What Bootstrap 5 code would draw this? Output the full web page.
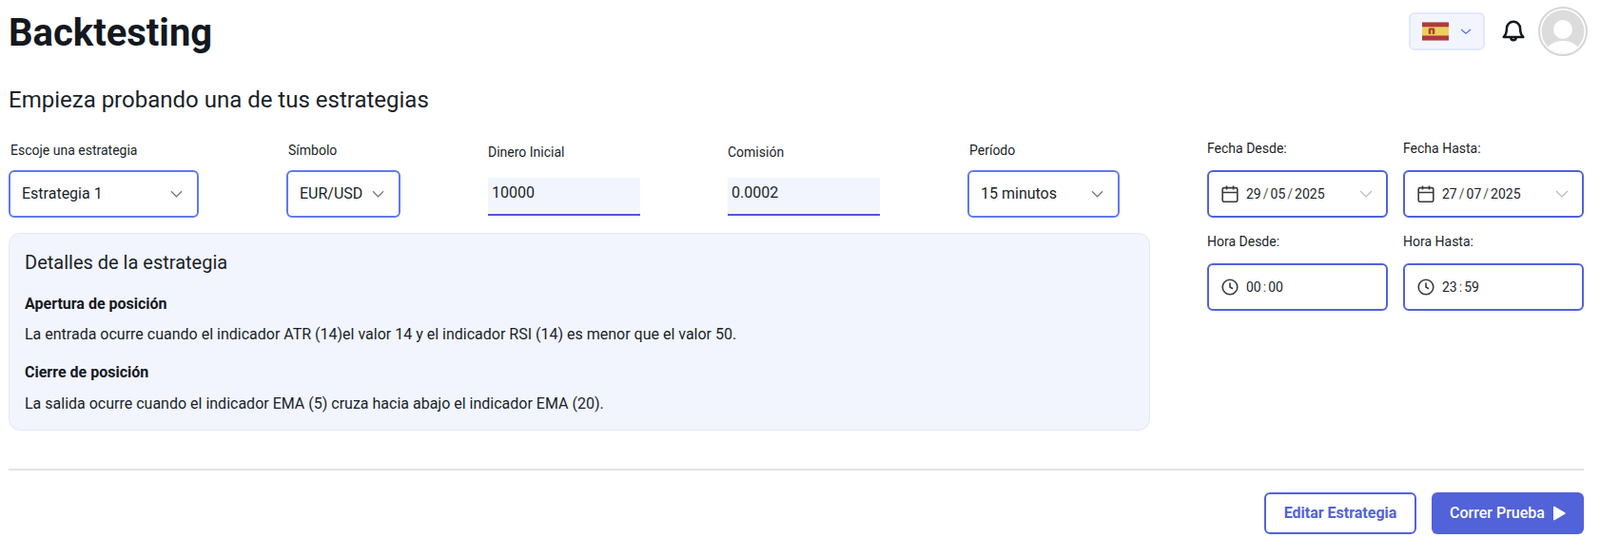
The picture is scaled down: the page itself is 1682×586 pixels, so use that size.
<!DOCTYPE html>
<html lang="es">
<head>
<meta charset="utf-8">
<title>Backtesting</title>
<link href="https://cdn.jsdelivr.net/npm/bootstrap@5.3.0/dist/css/bootstrap.min.css" rel="stylesheet">
<style>
body{font-family:Roboto,"Liberation Sans",sans-serif;color:#111827;background:#fff;overflow:hidden}
.bt-page{padding:0 17px 0 9px}
.bt-head{height:66px;margin-right:-4px}
.bt-title{font-size:40px;font-weight:700;line-height:70px;margin:0;color:#14181f}
.bt-lang{width:80px;height:40px;background:#f2f5fe;border:2px solid #e2e8fd;border-radius:6px;gap:12px}
.bt-avatar{margin-left:13px}
.bt-bell{margin-left:17px}
.bt-sub{font-size:24px;font-weight:400;line-height:32px;margin:23px 0 0;color:#1a1f29}
.bt-main{margin-top:22px}
.bt-left{width:1200px}
.bt-fields{display:grid;grid-template-columns:292px 212px 252px 252px 160px;height:102px}
.bt-label{font-size:14px;line-height:20px;margin:0;color:#1a1f29;display:block}
.bt-sel-wrap{padding-top:5px}
.bt-sel-wrap .bt-label{padding-left:2px;margin-bottom:11px}
.bt-in-wrap{padding-top:7px}
.bt-in-wrap .bt-label{margin-bottom:17px}
.bt-select.form-select{height:50px;border:2px solid #6279e8;border-radius:6px;font-size:16px;color:#1a1f29;padding:0 30px 0 12px;background-image:url("data:image/svg+xml,%3csvg xmlns='http://www.w3.org/2000/svg' viewBox='0 0 14 10'%3e%3cpath fill='none' stroke='%23777' stroke-width='1.300' d='M1 2l6 6 6-6'/%3e%3c/svg%3e");background-position:right 15px center;background-size:13px 10px;box-shadow:none}
.bt-w-1{width:200px}
.bt-w-2{width:120px}
.bt-w-3{width:160px}
.bt-number.form-control{width:160px;height:40px;background:#f2f5fe;border:0;border-bottom:2px solid #4f55de;border-radius:0;font-size:16px;color:#1a1f29;padding:0 4px 8px;box-shadow:none}
.bt-panel{width:1200px;height:208px;background:#f2f5fe;border:1px solid #e3e8f8;border-radius:12px;padding:16px 16px 0}
.bt-panel h5{font-size:20px;font-weight:400;line-height:28px;margin:0 0 18px;color:#1a1f29}
.bt-panel h6{font-size:16px;font-weight:700;line-height:24px;margin:0 0 8px;color:#14181f}
.bt-panel h6:nth-of-type(2){margin-bottom:9px}
.bt-panel p{font-size:16px;line-height:24px;margin:0 0 16px;color:#1a1f29}
.bt-right{margin-left:60px;width:396px;display:grid;grid-template-columns:190px 190px;column-gap:16px;align-content:start}
.bt-date-label{font-size:14px;line-height:20px;margin:3px 0 13px;color:#1a1f29;display:block}
.bt-hour-label{margin-top:0}
.bt-pick{height:50px;border:2px solid #5262d8;border-radius:6px;padding:0 14px 0 13px;font-size:14px;color:#1a1f29;margin-bottom:15px}
.bt-pick .bt-val{margin-left:8px}
.bt-pick .bt-sep{color:#555;padding:0 2px}
.bt-rule{border:0;border-top:2px solid #e2e2e2;opacity:1;margin:40px 0 0}
.bt-foot{margin-top:23px;gap:16px}
.bt-btn.btn{width:160px;height:44px;font-size:16px;border-radius:6px;padding:0;font-weight:500}
.bt-outline.btn{border:2px solid #5262d8;color:#5262d8;background:#fff;font-weight:700}
.bt-fill.btn{border:0;background:#5262d8;color:#fff;font-weight:500}
</style>
</head>
<body>
<div class="bt-page">
  <header class="bt-head d-flex align-items-center">
    <h1 class="bt-title flex-grow-1 align-self-start">Backtesting</h1>
    <div class="bt-lang d-flex align-items-center justify-content-center">
      <svg width="28" height="20" viewBox="0 0 28 20" aria-label="España">
        <rect width="28" height="20" fill="#d9a9a9"/>
        <rect y=".7" width="28" height="4.800" fill="#b03a3a"/>
        <rect y="5.500" width="28" height="9" fill="#edd15c"/>
        <rect y="14.500" width="28" height="4.800" fill="#b03a3a"/>
        <path d="M6.700 7.800l1-1.300h4.600l1 1.300v4.200a1 1 0 0 1-1 1h-4.600a1 1 0 0 1-1-1z" fill="#a8412c"/>
        <rect x="9.200" y="8.500" width="1.600" height="4.500" fill="#edd15c"/>
      </svg>
      <svg width="12" height="12" viewBox="0 0 12 12" fill="none" stroke="#4f6cf0" stroke-width="1.200"><path d="M1 4l5 4.200L11 4"/></svg>
    </div>
    <svg class="bt-bell" width="26" height="26" viewBox="0 0 24 24" fill="none" stroke="#14181f" stroke-width="2.300" stroke-linecap="round" stroke-linejoin="round"><path d="M12 2.500a6.500 6.500 0 0 0-6.500 6.500c0 5-1.500 7-3 8.500h19c-1.500-1.500-3-3.500-3-8.500A6.500 6.500 0 0 0 12 2.500z"/><path d="M9.500 18a2.500 2.500 0 0 0 5 0"/></svg>
    <svg class="bt-avatar" width="52" height="52" viewBox="0 0 52 52"><defs><clipPath id="av"><circle cx="26" cy="26" r="22.500"/></clipPath></defs><circle cx="26" cy="26" r="25" fill="#fff" stroke="#d6d6d6" stroke-width="2"/><circle cx="26" cy="26" r="22.500" fill="#dcdcdc"/><g clip-path="url(#av)"><circle cx="26" cy="24" r="10" fill="#fff"/><ellipse cx="26" cy="47" rx="17" ry="11" fill="#fff"/></g></svg>
  </header>

  <h2 class="bt-sub">Empieza probando una de tus estrategias</h2>

  <div class="bt-main d-flex">
    <div class="bt-left">
      <div class="bt-fields">
        <div class="bt-sel-wrap">
          <label class="bt-label">Escoje una estrategia</label>
          <select class="form-select bt-select bt-w-1"><option>Estrategia 1</option></select>
        </div>
        <div class="bt-sel-wrap">
          <label class="bt-label">Símbolo</label>
          <select class="form-select bt-select bt-w-2"><option>EUR/USD</option></select>
        </div>
        <div class="bt-in-wrap">
          <label class="bt-label">Dinero Inicial</label>
          <input class="form-control bt-number" value="10000">
        </div>
        <div class="bt-in-wrap">
          <label class="bt-label">Comisión</label>
          <input class="form-control bt-number" value="0.0002">
        </div>
        <div class="bt-sel-wrap">
          <label class="bt-label">Período</label>
          <select class="form-select bt-select bt-w-3"><option>15 minutos</option></select>
        </div>
      </div>
      <section class="bt-panel">
        <h5>Detalles de la estrategia</h5>
        <h6>Apertura de posición</h6>
        <p>La entrada ocurre cuando el indicador ATR (14)el valor 14 y el indicador RSI (14) es menor que el valor 50.</p>
        <h6>Cierre de posición</h6>
        <p>La salida ocurre cuando el indicador EMA (5) cruza hacia abajo el indicador EMA (20).</p>
      </section>
    </div>

    <div class="bt-right">
      <div>
        <label class="bt-date-label">Fecha Desde:</label>
        <div class="bt-pick d-flex align-items-center">
          <svg width="18" height="18" viewBox="0 0 18 18" fill="none" stroke="#3a3a3a" stroke-width="1.600"><rect x="1.200" y="2.600" width="15.600" height="14.600" rx="1.500"/><path d="M1.200 7.500h15.600M5.500 .6v3.900M12.500 .6v3.900"/></svg>
          <span class="bt-val flex-grow-1">29<span class="bt-sep">/</span>05<span class="bt-sep">/</span>2025</span>
          <svg width="14" height="10" viewBox="0 0 14 10" fill="none" stroke="#b5b7c2" stroke-width="1.200"><path d="M1 2l6 6 6-6"/></svg>
        </div>
      </div>
      <div>
        <label class="bt-date-label">Fecha Hasta:</label>
        <div class="bt-pick d-flex align-items-center">
          <svg width="18" height="18" viewBox="0 0 18 18" fill="none" stroke="#3a3a3a" stroke-width="1.600"><rect x="1.200" y="2.600" width="15.600" height="14.600" rx="1.500"/><path d="M1.200 7.500h15.600M5.500 .6v3.900M12.500 .6v3.900"/></svg>
          <span class="bt-val flex-grow-1">27<span class="bt-sep">/</span>07<span class="bt-sep">/</span>2025</span>
          <svg width="14" height="10" viewBox="0 0 14 10" fill="none" stroke="#b5b7c2" stroke-width="1.200"><path d="M1 2l6 6 6-6"/></svg>
        </div>
      </div>
      <div>
        <label class="bt-date-label bt-hour-label">Hora Desde:</label>
        <div class="bt-pick d-flex align-items-center">
          <svg width="18" height="18" viewBox="0 0 18 18" fill="none" stroke="#3a3a3a" stroke-width="1.600"><circle cx="9" cy="9" r="7.800"/><path d="M9 4.500V9l3 1.800"/></svg>
          <span class="bt-val flex-grow-1">00<span class="bt-sep">:</span>00</span>
        </div>
      </div>
      <div>
        <label class="bt-date-label bt-hour-label">Hora Hasta:</label>
        <div class="bt-pick d-flex align-items-center">
          <svg width="18" height="18" viewBox="0 0 18 18" fill="none" stroke="#3a3a3a" stroke-width="1.600"><circle cx="9" cy="9" r="7.800"/><path d="M9 4.500V9l3 1.800"/></svg>
          <span class="bt-val flex-grow-1">23<span class="bt-sep">:</span>59</span>
        </div>
      </div>
    </div>
  </div>

  <hr class="bt-rule">
  <div class="bt-foot d-flex justify-content-end">
    <button class="btn bt-btn bt-outline">Editar Estrategia</button>
    <button class="btn bt-btn bt-fill d-flex align-items-center justify-content-center gap-2">Correr Prueba
      <svg width="14" height="16" viewBox="0 0 14 16" fill="#fff"><path d="M1 1.500v13a.8.8 0 0 0 1.200.7l11-6.500a.8.8 0 0 0 0-1.400l-11-6.500A.8.8 0 0 0 1 1.500z"/></svg>
    </button>
  </div>
</div>
<script src="https://cdn.jsdelivr.net/npm/bootstrap@5.3.0/dist/js/bootstrap.bundle.min.js"></script>
</body>
</html>
